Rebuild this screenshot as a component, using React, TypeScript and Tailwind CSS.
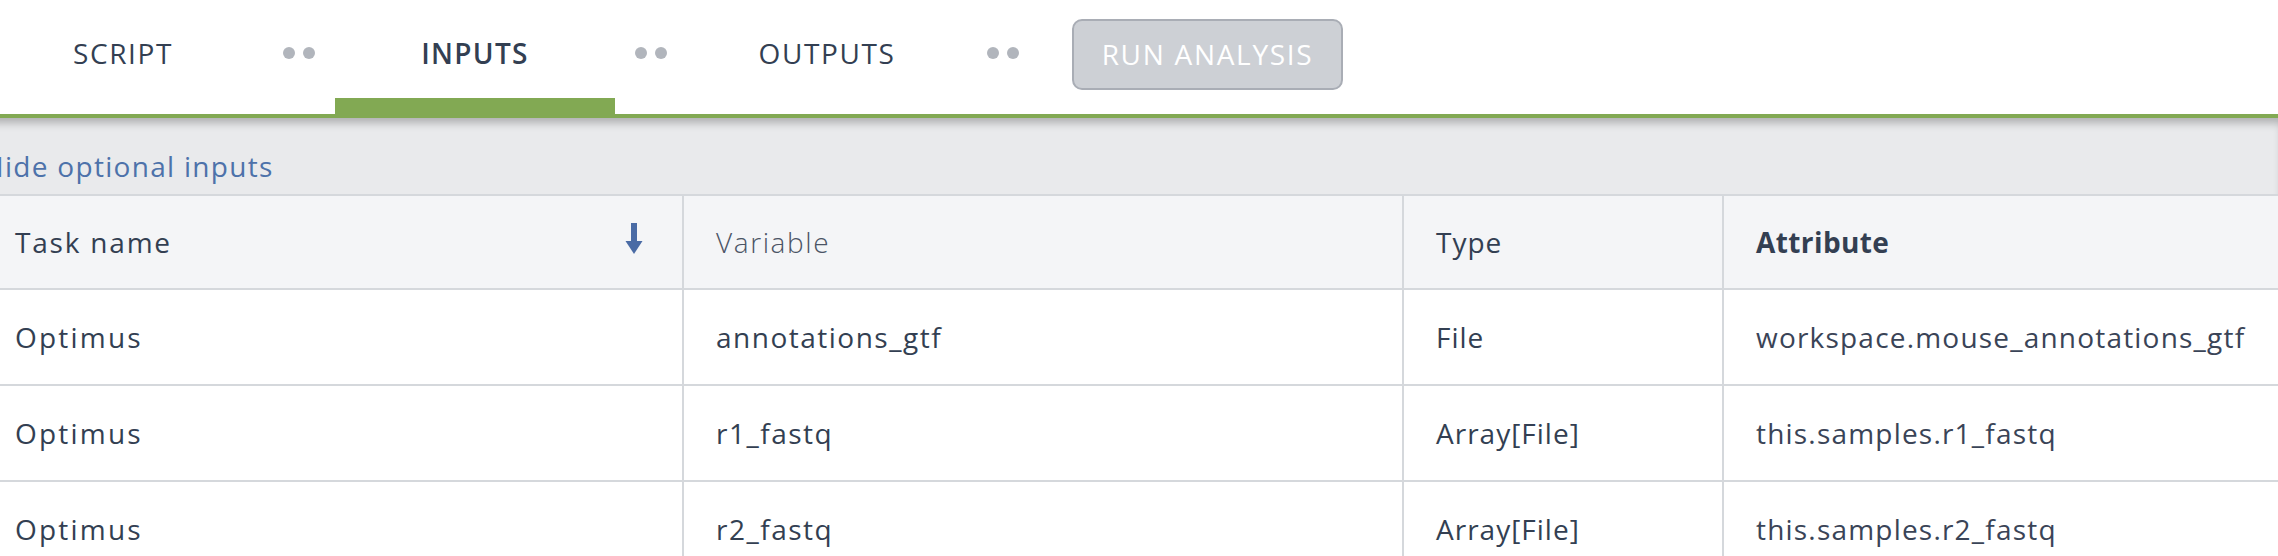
import React from "react";

function Tab({ label, active }: { label: string; active?: boolean }) {
  return (
    <div className="flex h-[114px] w-[280px] shrink-0 flex-col">
      <div
        className={
          active
            ? "flex flex-1 items-center justify-center pt-[8px] text-[28px] leading-[38px] tracking-[1.3px] font-semibold text-[#333f52]"
            : "flex flex-1 items-center justify-center pt-[8px] text-[28px] leading-[38px] tracking-[1.6px] font-normal text-[#333f52]"
        }
      >
        {label}
      </div>
      <div className={active ? "h-[16px] bg-[#82a953]" : "h-[16px]"} />
    </div>
  );
}

function Dots() {
  return (
    <div className="mx-[20px] flex h-[106px] shrink-0 items-center gap-[8px]">
      <span className="block h-[12px] w-[12px] rounded-full bg-[#b1b5bc]" />
      <span className="block h-[12px] w-[12px] rounded-full bg-[#b1b5bc]" />
    </div>
  );
}

const rows = [
  { task: "Optimus", variable: "annotations_gtf", type: "File", attr: "workspace.mouse_annotations_gtf" },
  { task: "Optimus", variable: "r1_fastq", type: "Array[File]", attr: "this.samples.r1_fastq" },
  { task: "Optimus", variable: "r2_fastq", type: "Array[File]", attr: "this.samples.r2_fastq" },
];

export default function App() {
  return (
    <div className="h-[556px] w-full overflow-hidden bg-white font-['Open_Sans',sans-serif] text-[#333f52]">
      <div className="ml-[-17px] w-[calc(100%+17px)]">
        {/* Nav */}
        <div className="flex h-[118px] items-start border-b-4 border-[#82a953] bg-white">
          <Tab label="SCRIPT" />
          <Dots />
          <Tab label="INPUTS" active />
          <Dots />
          <Tab label="OUTPUTS" />
          <Dots />
          <div className="ml-[33px] flex h-[108px] shrink-0 items-center">
            <div className="flex h-[71px] w-[271px] items-center justify-center rounded-[10px] border-2 border-[#a9adb5] bg-[#cdd0d5] text-[28px] leading-[38px] tracking-[1.7px] text-white">
              RUN ANALYSIS
            </div>
          </div>
        </div>

        {/* Optional inputs bar */}
        <div className="h-[76px] bg-[#e9eaec] pt-[29px] shadow-[inset_0_9px_9px_-4px_rgba(0,0,0,0.25)]">
          <span className="text-[28px] leading-[38px] tracking-[1.3px] text-[#4d72aa]">Hide optional inputs</span>
        </div>

        {/* Table */}
        <div className="grid grid-cols-[699px_720px_320px_1fr] border-t-2 border-[#d5d8dc] text-[28px] leading-[38px] tracking-[1.8px]">
          <div className="flex h-[94px] items-center justify-between border-b-2 border-[#d5d8dc] bg-[#f4f5f7] pl-[32px] pr-[39px]">
            <span className="text-[#333f52]">Task name</span>
            <svg width="18" height="31" viewBox="0 0 18 31" className="mb-[8px]">
              <rect x="6" y="0" width="6" height="20" fill="#4a6ba5" />
              <polygon points="0.5,18 17.5,18 9,31" fill="#4a6ba5" />
            </svg>
          </div>
          <div className="flex h-[94px] items-center border-b-2 border-l-2 border-[#d5d8dc] bg-[#f4f5f7] pl-[32px]">
            <span className="font-light tracking-[1.6px] text-[#4b5465]">Variable</span>
          </div>
          <div className="flex h-[94px] items-center border-b-2 border-l-2 border-[#d5d8dc] bg-[#f4f5f7] pl-[32px]">
            <span className="tracking-[1px] text-[#333f52]">Type</span>
          </div>
          <div className="flex h-[94px] items-center border-b-2 border-l-2 border-[#d5d8dc] bg-[#f4f5f7] pl-[32px]">
            <span className="font-bold tracking-[0.4px] text-[#333f52]">Attribute</span>
          </div>

          {rows.map((r, i) => (
            <React.Fragment key={i}>
              <div className="flex h-[96px] items-center border-b-2 border-[#d5d8dc] bg-white pl-[32px]">
                <span className="tracking-[2.2px]">{r.task}</span>
              </div>
              <div className="flex h-[96px] items-center border-b-2 border-l-2 border-[#d5d8dc] bg-white pl-[32px]">
                <span className="tracking-[1.5px]">{r.variable}</span>
              </div>
              <div className="flex h-[96px] items-center border-b-2 border-l-2 border-[#d5d8dc] bg-white pl-[32px]">
                <span className="tracking-[1px]">{r.type}</span>
              </div>
              <div className="flex h-[96px] items-center border-b-2 border-l-2 border-[#d5d8dc] bg-white pl-[32px]">
                <span className="tracking-[1.2px] text-[#3a4457]">{r.attr}</span>
              </div>
            </React.Fragment>
          ))}
        </div>
      </div>
    </div>
  );
}
